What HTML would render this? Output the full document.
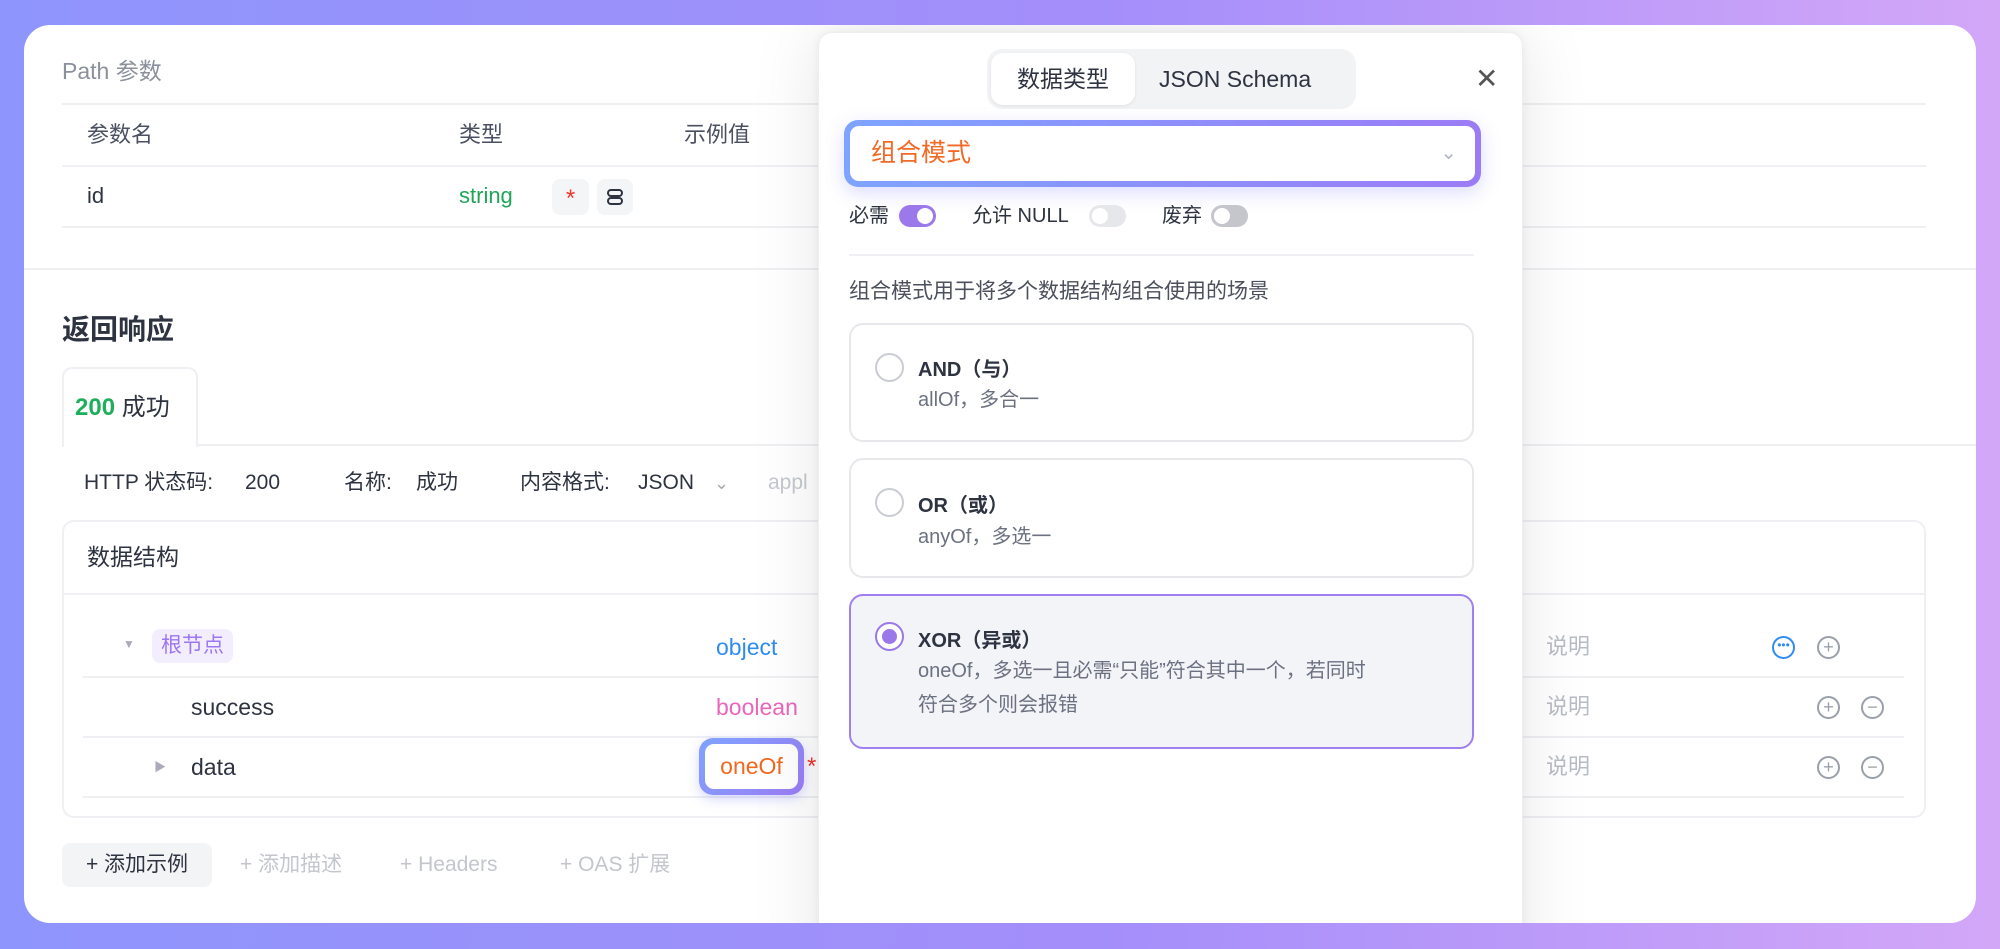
<!DOCTYPE html>
<html><head><meta charset="utf-8"><style>
*{margin:0;padding:0;box-sizing:border-box}
body{width:2000px;height:949px;overflow:hidden;background:linear-gradient(90deg,#8e95fc 0%,#a48efa 55%,#d3a7f8 100%);font-family:"Liberation Sans","Noto Sans CJK SC",sans-serif;color:#2d3340;position:relative}
.card{position:absolute;left:24px;top:25px;width:1952px;height:898px;background:#fff;border-radius:26px;overflow:hidden}
.a{position:absolute;white-space:nowrap}
.t{font-size:22px;line-height:28px}
.hl{position:absolute;height:2px;background:#eef0f3}
.g{color:#8a909c}
.ic{position:absolute;width:23px;height:23px;border:2px solid #9aa0aa;border-radius:50%;text-align:center;line-height:18px;font-size:18px;color:#9aa0aa}
.pop{position:absolute;left:794px;top:7px;width:705px;height:950px;background:#fff;border-radius:14px;box-shadow:0 0 70px rgba(0,0,0,.10),0 0 10px rgba(0,0,0,.05);border:1px solid #eceef2}
.tg{position:absolute;width:37px;height:22px;border-radius:11px}
.tg i{position:absolute;top:3px;width:16px;height:16px;border-radius:50%;background:#fff}
.opt{position:absolute;left:30px;width:625px;border:2px solid #e6e8ec;border-radius:14px;background:#fff}
.rad{position:absolute;left:24px;width:29px;height:29px;border:2px solid #c9ccd2;border-radius:50%;background:#fff}
.ot{position:absolute;left:67px;font-size:20px;font-weight:bold;color:#2d3340}
.os{position:absolute;left:67px;font-size:20px;color:#6b7180;line-height:34px}
</style></head><body>
<div class="card">
 <div class="a t g" style="left:38px;top:32px;font-size:23px">Path 参数</div>
 <div class="hl" style="left:38px;top:78px;width:1864px"></div>
 <div class="a t" style="left:63px;top:96px;color:#4a5060">参数名</div>
 <div class="a t" style="left:435px;top:96px;color:#4a5060">类型</div>
 <div class="a t" style="left:660px;top:96px;color:#4a5060">示例值</div>
 <div class="hl" style="left:38px;top:140px;width:1864px"></div>
 <div class="a t" style="left:63px;top:157px">id</div>
 <div class="a t" style="left:435px;top:157px;color:#20a558">string</div>
 <div class="a" style="left:528px;top:154px;width:37px;height:36px;background:#f4f5f7;border-radius:8px;color:#f0352b;font-size:24px;text-align:center;line-height:40px">*</div>
 <div class="a" style="left:573px;top:154px;width:36px;height:36px;background:#f4f5f7;border-radius:8px">
  <svg width="36" height="36" viewBox="0 0 36 36"><rect x="11" y="11" width="14" height="6" rx="3" fill="none" stroke="#2d3340" stroke-width="2"/><rect x="11" y="19" width="14" height="6" rx="3" fill="none" stroke="#2d3340" stroke-width="2"/></svg></div>
 <div class="hl" style="left:38px;top:201px;width:1864px"></div>
 <div class="hl" style="left:0;top:243px;width:1952px"></div>
 <div class="a" style="left:38px;top:288px;font-size:28px;font-weight:bold;line-height:34px">返回响应</div>
 <div class="a" style="left:38px;top:342px;width:136px;height:80px;border:2px solid #eef0f3;border-bottom:none;border-radius:10px 10px 0 0;background:#fff"></div>
 <div class="a" style="left:51px;top:368px;font-size:24px;line-height:30px"><b style="color:#1fae5b">200</b> 成功</div>
 <div class="hl" style="left:174px;top:419px;width:1778px"></div>
 <div class="a" style="left:60px;top:444px;font-size:21px;line-height:28px">HTTP 状态码:</div>
 <div class="a" style="left:221px;top:444px;font-size:21px;line-height:28px">200</div>
 <div class="a" style="left:320px;top:444px;font-size:21px;line-height:28px">名称:</div>
 <div class="a" style="left:392px;top:444px;font-size:21px;line-height:28px">成功</div>
 <div class="a" style="left:496px;top:444px;font-size:21px;line-height:28px">内容格式:</div>
 <div class="a" style="left:614px;top:444px;font-size:21px;line-height:28px">JSON</div>
 <div class="a" style="left:690px;top:444px;font-size:18px;line-height:28px;color:#aaa">⌄</div>
 <div class="a" style="left:744px;top:444px;font-size:21px;line-height:28px;color:#c5c8ce">appl</div>
 <div class="a" style="left:38px;top:495px;width:1864px;height:298px;border:2px solid #eef0f3;border-radius:12px"></div>
 <div class="a" style="left:63px;top:517px;font-size:23px;line-height:30px">数据结构</div>
 <div class="hl" style="left:38px;top:568px;width:1864px"></div>
 <div class="a" style="left:99px;top:612px;font-size:12px;color:#aab">▼</div>
 <div class="a" style="left:128px;top:604px;width:81px;height:34px;background:#f2eefe;border-radius:8px;color:#9d76f2;font-size:21px;line-height:34px;text-align:center">根节点</div>
 <div class="a t" style="left:692px;top:608px;color:#2e8cf2;font-size:23px">object</div>
 <div class="hl" style="left:59px;top:651px;width:1821px"></div>
 <div class="a t" style="left:167px;top:668px;font-size:23px">success</div>
 <div class="a t" style="left:692px;top:668px;color:#ea66bc;font-size:23px">boolean</div>
 <div class="hl" style="left:59px;top:711px;width:1821px"></div>
 <div class="a" style="left:130px;top:733px;font-size:12px;color:#aab">▶</div>
 <div class="a t" style="left:167px;top:728px;font-size:23px">data</div>
 <div class="hl" style="left:59px;top:771px;width:1821px"></div>
 <div class="a" style="left:675px;top:713px;width:105px;height:57px;border-radius:14px;background:linear-gradient(135deg,#7ea4ff,#9d7cf6);padding:6px;box-shadow:0 4px 12px rgba(120,120,250,.3)"><div style="background:#fff;border-radius:9px;height:45px;color:#f1681e;font-size:23px;line-height:45px;text-align:center">oneOf</div></div>
 <div class="a" style="left:783px;top:728px;color:#f0352b;font-size:24px">*</div>
 <div class="a" style="left:38px;top:818px;width:150px;height:44px;background:#f3f4f6;border-radius:8px;font-size:21px;line-height:44px;text-align:center">+ 添加示例</div>
 <div class="a" style="left:216px;top:826px;font-size:21px;line-height:28px;color:#c3c6cc">+ 添加描述</div>
 <div class="a" style="left:376px;top:826px;font-size:21px;line-height:28px;color:#c3c6cc">+ Headers</div>
 <div class="a" style="left:536px;top:826px;font-size:21px;line-height:28px;color:#c3c6cc">+ OAS 扩展</div>
 <div class="a t" style="left:1522px;top:608px;color:#b8bcc4;font-size:22px">说明</div>
 <div class="a t" style="left:1522px;top:668px;color:#b8bcc4;font-size:22px">说明</div>
 <div class="a t" style="left:1522px;top:728px;color:#b8bcc4;font-size:22px">说明</div>
 <div class="ic" style="left:1748px;top:611px;border-color:#2e8cf2;color:#2e8cf2;font-size:12px;line-height:14px">•••</div>
 <div class="ic" style="left:1793px;top:611px">+</div>
 <div class="ic" style="left:1793px;top:671px">+</div>
 <div class="ic" style="left:1837px;top:671px">−</div>
 <div class="ic" style="left:1793px;top:731px">+</div>
 <div class="ic" style="left:1837px;top:731px">−</div>

 <div class="pop">
  <div class="a" style="left:168px;top:16px;width:369px;height:60px;background:#f2f3f5;border-radius:15px"></div>
  <div class="a" style="left:172px;top:20px;width:144px;height:52px;background:#fff;border-radius:12px;box-shadow:0 1px 3px rgba(0,0,0,.08);text-align:center;line-height:52px;font-size:23px">数据类型</div>
  <div class="a" style="left:340px;top:32px;font-size:23px;line-height:28px">JSON Schema</div>
  <div class="a" style="left:656px;top:32px;font-size:28px;line-height:28px;color:#555">✕</div>
  <div class="a" style="left:25px;top:87px;width:637px;height:67px;border-radius:14px;background:linear-gradient(90deg,#7ea4ff,#9c7cf6);padding:6px;box-shadow:0 6px 18px rgba(120,120,250,.25)"><div style="background:#fff;border-radius:9px;height:55px;position:relative"><span style="position:absolute;left:21px;top:12px;font-size:25px;line-height:30px;color:#f26a26">组合模式</span><span style="position:absolute;right:18px;top:14px;color:#b4b8c0;font-size:20px">⌄</span></div></div>
  <div class="a" style="left:30px;top:170px;font-size:20px;line-height:26px">必需</div>
  <div class="tg" style="left:80px;top:172px;background:#9b79ea"><i style="left:18px"></i></div>
  <div class="a" style="left:153px;top:170px;font-size:20px;line-height:26px">允许 NULL</div>
  <div class="tg" style="left:270px;top:172px;background:#e6e7ea"><i style="left:3px"></i></div>
  <div class="a" style="left:343px;top:170px;font-size:20px;line-height:26px">废弃</div>
  <div class="tg" style="left:392px;top:172px;background:#c4c6cb"><i style="left:3px"></i></div>
  <div class="hl" style="left:30px;top:221px;width:625px"></div>
  <div class="a" style="left:30px;top:245px;font-size:21px;line-height:28px;color:#4b505c">组合模式用于将多个数据结构组合使用的场景</div>
  <div class="opt" style="top:290px;height:119px"><div class="rad" style="top:28px"></div><div class="ot" style="top:28px">AND（与）</div><div class="os" style="top:58px">allOf，多合一</div></div>
  <div class="opt" style="top:425px;height:120px"><div class="rad" style="top:28px"></div><div class="ot" style="top:29px">OR（或）</div><div class="os" style="top:60px">anyOf，多选一</div></div>
  <div class="opt" style="top:561px;height:155px;border-color:#a07ff0;background:#f3f4f8"><div class="rad" style="top:26px;border-color:#9a78ea"><div style="position:absolute;left:5px;top:5px;width:15px;height:15px;border-radius:50%;background:#9a78ea"></div></div><div class="ot" style="top:28px">XOR（异或）</div><div class="os" style="top:58px">oneOf，多选一且必需“只能”符合其中一个，若同时<br>符合多个则会报错</div></div>
 </div>
</div>
</body></html>
